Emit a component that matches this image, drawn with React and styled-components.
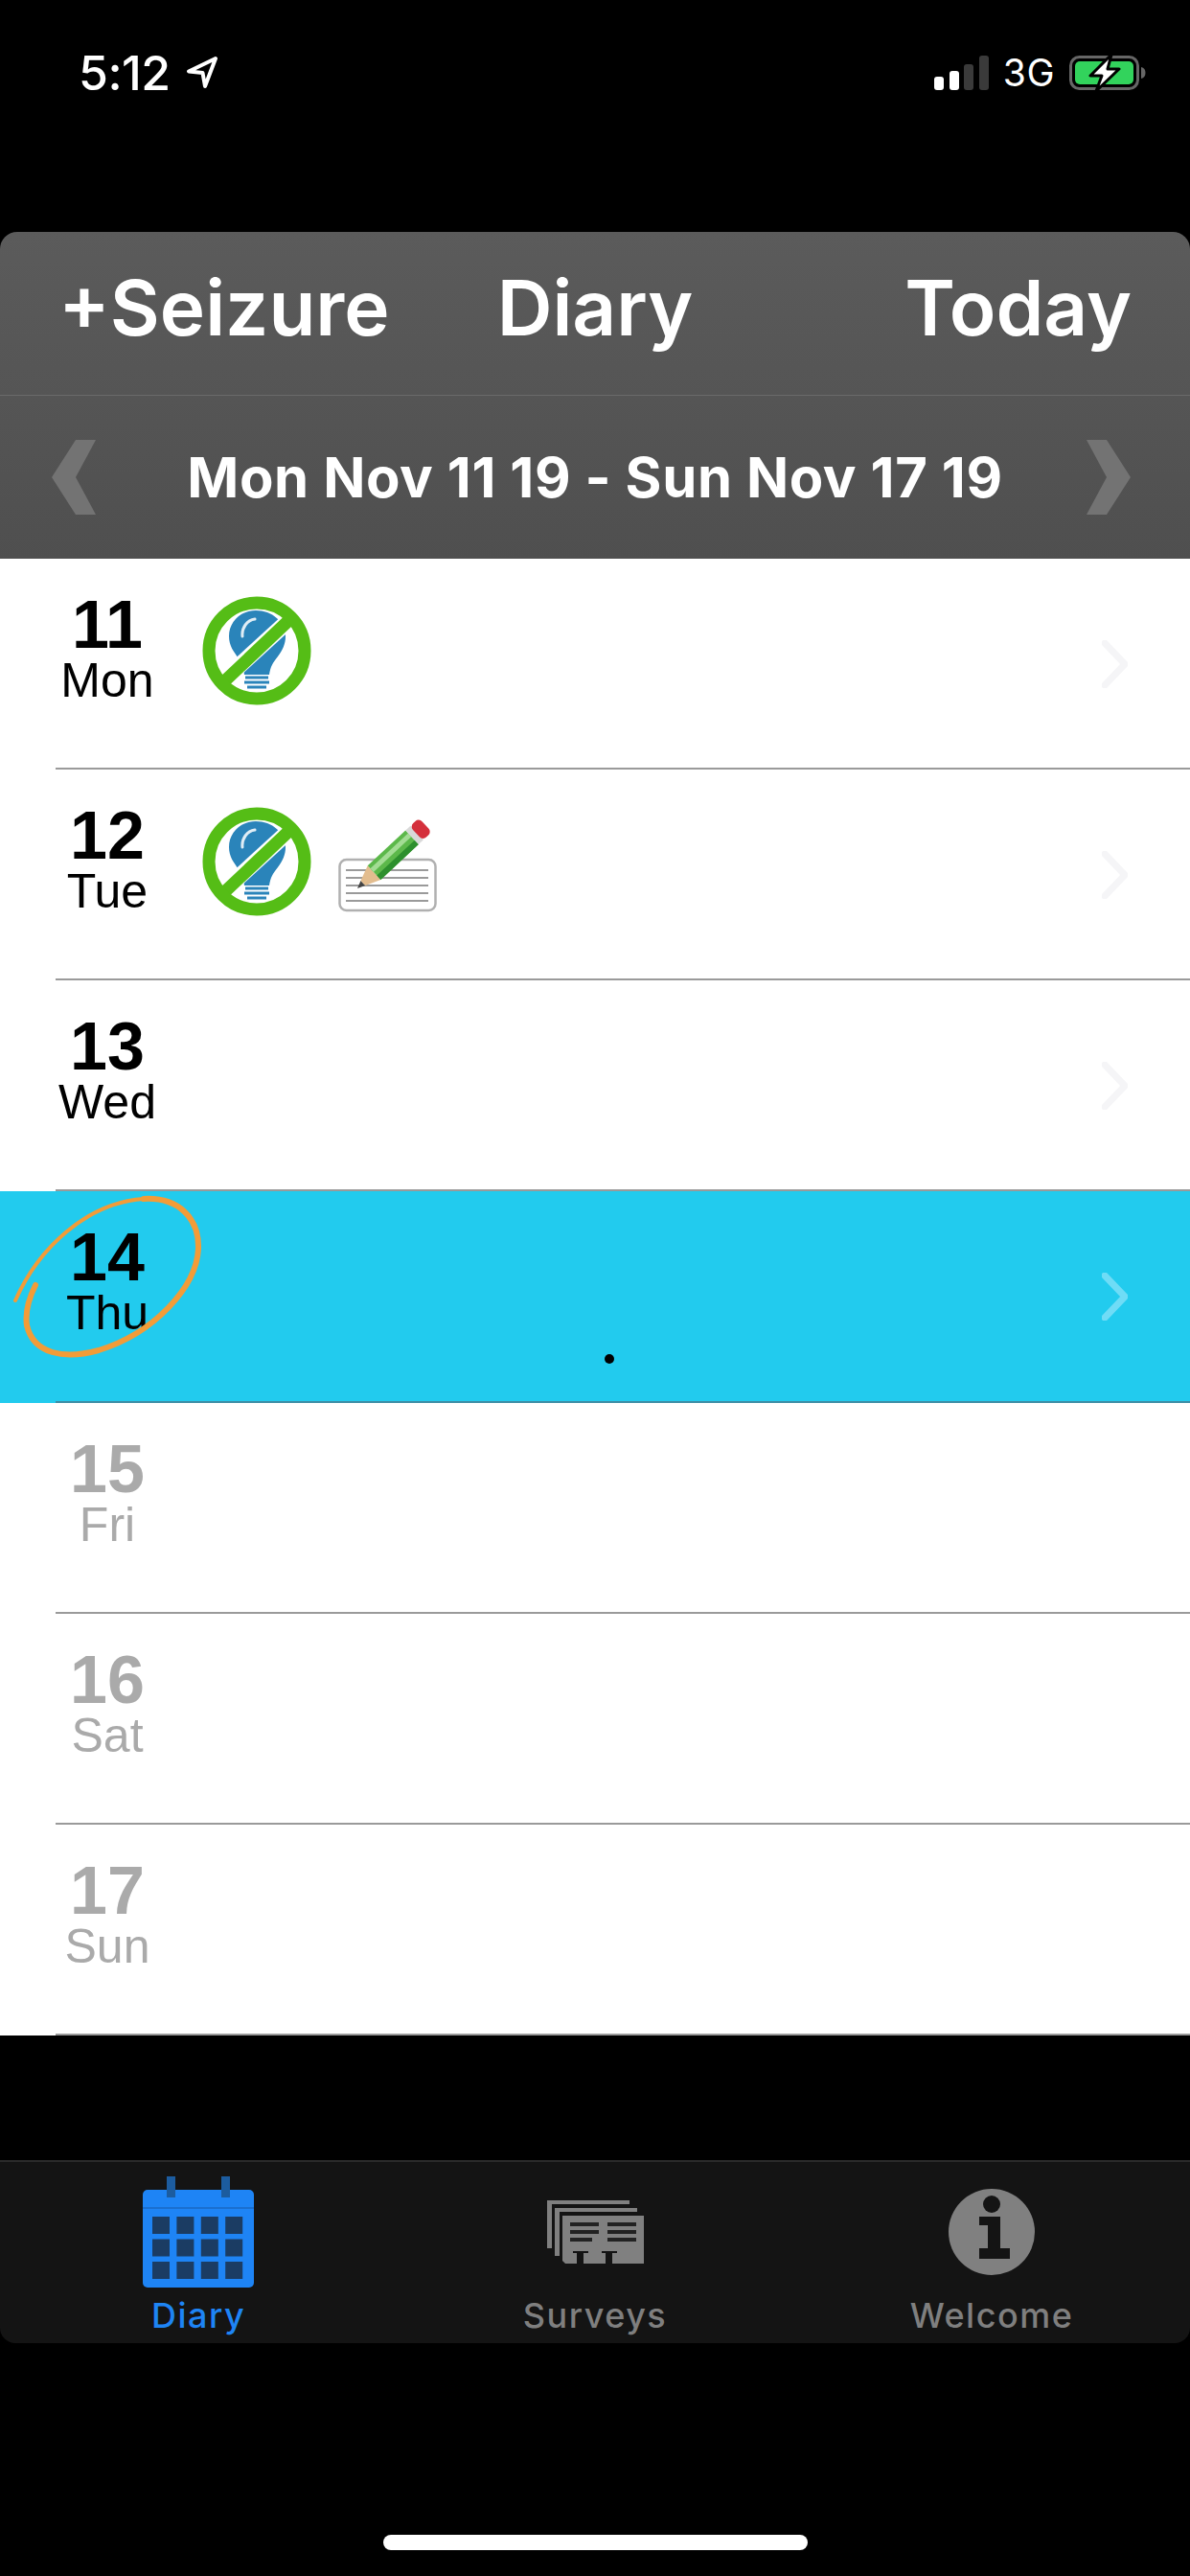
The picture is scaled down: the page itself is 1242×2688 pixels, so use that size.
import React from 'react';
import styled, { createGlobalStyle } from 'styled-components';

const UI_FONT = `Inter, "Noto Sans", sans-serif`;
const LIST_FONT = `"Liberation Sans", Arial, sans-serif`;

const GlobalStyle = createGlobalStyle`
  html, body {
    margin: 0;
    padding: 0;
    background: #000;
  }
`;

const Page = styled.div`
  width: 1242px;
  height: 2688px;
  background: #000;
  display: flex;
  flex-direction: column;
  overflow: hidden;
  font-family: ${UI_FONT};
`;

const StatusBar = styled.div`
  height: 242px;
  box-sizing: border-box;
  padding: 50px 46px 0 82px;
  display: flex;
  justify-content: space-between;
  align-items: flex-start;
  color: #fff;
`;
const StatusGroup = styled.div`
  display: flex;
  align-items: center;
  gap: ${(p) => p.$gap}px;
  height: 52px;
`;
const Clock = styled.span`
  font-size: 50px;
  font-weight: 500;
  line-height: 52px;
  letter-spacing: -0.5px;
`;
const Network = styled.span`
  font-size: 39px;
  line-height: 52px;
  font-weight: 400;
  letter-spacing: 0.5px;
`;

const Header = styled.header`
  border-radius: 18px 18px 0 0;
  overflow: hidden;
  color: #fff;
`;
const TitleRow = styled.div`
  height: 171px;
  box-sizing: border-box;
  padding: 0 61px 14px;
  display: grid;
  grid-template-columns: 1fr auto 1fr;
  align-items: center;
  font-size: 80px;
  font-weight: 600;
  background: linear-gradient(#5b5b5b, #555);
  border-bottom: 1px solid #6a6a6a;
`;
const TitleEnd = styled.span`
  text-align: ${(p) => p.$align};
`;
const WeekRow = styled.div`
  height: 170px;
  box-sizing: border-box;
  padding: 0 62px 0 54px;
  display: flex;
  justify-content: space-between;
  align-items: center;
  background: linear-gradient(#555, #4f4f4f);
`;
const WeekLabel = styled.span`
  font-size: 58px;
  font-weight: 700;
  letter-spacing: 0.6px;
  margin-left: 8px;
`;

const DayList = styled.div`
  height: 1541px;
  display: grid;
  grid-template-rows: repeat(7, 1fr);
  background: #fff;
`;
const DayRow = styled.div`
  position: relative;
  display: flex;
  align-items: flex-start;
  gap: 9px;
  padding: 0 65px 0 22px;
  background: ${(p) => (p.$selected ? '#22cbee' : '#fff')};
  &::after {
    content: '';
    position: absolute;
    left: 58px;
    right: 0;
    bottom: 0;
    height: 2px;
    background: ${(p) => (p.$selected ? '#3e8ea6' : '#9a9a9a')};
  }
`;
const DateCol = styled.div`
  width: 180px;
  flex: none;
  padding-top: 36px;
  text-align: center;
  font-family: ${LIST_FONT};
  color: ${(p) => (p.$future ? '#aaaaaa' : '#000')};
`;
const DayNumber = styled.div`
  font-size: 70px;
  font-weight: 700;
  line-height: 66px;
`;
const DayName = styled.div`
  font-size: 50px;
  line-height: 50px;
`;
const Marks = styled.div`
  display: flex;
  align-items: flex-start;
  gap: 28px;
  padding-top: 39px;
`;
const NoteMark = styled.svg`
  margin-top: 12px;
`;
const RowChevron = styled.svg`
  margin-left: auto;
  align-self: center;
`;
const Scribble = styled.svg`
  position: absolute;
  left: 0;
  top: 0;
  pointer-events: none;
`;
const Dot = styled.span`
  position: absolute;
  left: 631px;
  top: 170px;
  width: 10px;
  height: 10px;
  border-radius: 50%;
  background: #000;
`;

const TabBar = styled.nav`
  margin-top: 130px;
  height: 191px;
  box-sizing: border-box;
  background: #141414;
  border-top: 2px solid #2a2a2a;
  border-radius: 0 0 16px 16px;
  display: grid;
  grid-template-columns: repeat(3, 1fr);
`;
const Tab = styled.div`
  display: flex;
  flex-direction: column;
  align-items: center;
  color: ${(p) => (p.$active ? '#1e84f5' : '#7f7f7f')};
`;
const TabIcon = styled.div`
  height: 145px;
  display: flex;
  align-items: center;
  justify-content: center;
`;
const TabLabel = styled.span`
  font-size: 36px;
  font-weight: 500;
  line-height: 36px;
  letter-spacing: 1.5px;
  margin-top: -3px;
`;

const HomeBar = styled.div`
  width: 443px;
  height: 16px;
  margin: 200px auto 0;
  border-radius: 8px;
  background: #fff;
`;

const LocationIcon = () => (
  <svg width="34" height="34" viewBox="0 0 34 34">
    <path d="M31 2 3 15.5 17.5 17 20 31Z" fill="none" stroke="#fff" strokeWidth="4" strokeLinejoin="round" />
  </svg>
);

const SignalIcon = () => (
  <svg width="57" height="36" viewBox="0 0 57 36">
    <rect x="0" y="22" width="10" height="14" rx="3" fill="#fff" />
    <rect x="16" y="16" width="10" height="20" rx="3" fill="#fff" />
    <rect x="31" y="9" width="10" height="27" rx="3" fill="#3a3a3a" />
    <rect x="47" y="0" width="10" height="36" rx="3" fill="#3a3a3a" />
  </svg>
);

const BatteryIcon = () => (
  <svg width="80" height="38" viewBox="0 0 80 38">
    <rect x="1.5" y="2.5" width="70" height="33" rx="9" fill="none" stroke="#666" strokeWidth="3" />
    <rect x="6" y="7" width="61" height="24" rx="5" fill="#32d35c" />
    <path d="M75 13c3 .5 4.500 3 4.500 6s-1.500 5.500-4.500 6z" fill="#666" />
    <path d="M44 0 22 22h12l-6 16 24-23H40z" fill="#fff" stroke="#000" strokeWidth="3" strokeLinejoin="round" />
  </svg>
);

const PrevArrow = () => (
  <svg width="46" height="78" viewBox="0 0 46 78">
    <path d="M25 0h21L25 39l21 39H25L0 39Z" fill="#737373" />
  </svg>
);
const NextArrow = () => (
  <svg width="46" height="78" viewBox="0 0 46 78">
    <path d="M21 0H0l21 39L0 78h21l25-39Z" fill="#737373" />
  </svg>
);

const NoBulbIcon = () => (
  <svg width="114" height="114" viewBox="0 0 114 114">
    <path
      d="M56 15c-16 0-28 12-28 27 0 10 5 16 10 23 4 5 5 10 6 17h26c1-8 4-13 9-19 5-7 8-13 8-21 0-15-14-27-31-27Z"
      fill="#2a84ba"
    />
    <path d="M42 42c-1-9 5-17 13-18" fill="none" stroke="#fff" strokeWidth="3" strokeLinecap="round" opacity="0.85" />
    <path d="M45 85h24M44 90h26M47 95h20" stroke="#2a84ba" strokeWidth="3" fill="none" />
    <path d="M22 88 92 24" stroke="#fff" strokeWidth="17" />
    <path d="M20 92 94 22" stroke="#55bd16" strokeWidth="13" />
    <circle cx="57" cy="57" r="50" fill="none" stroke="#55bd16" strokeWidth="13" />
  </svg>
);

const NoteIcon = () => (
  <NoteMark width="106" height="98" viewBox="0 0 106 98">
    <rect x="1.500" y="43" width="100" height="53" rx="7" fill="#fff" stroke="#b0b0b0" strokeWidth="2.500" />
    <path d="M8 54h86M8 62h86M8 70h86M8 78h86M8 86h86" stroke="#9a9a9a" strokeWidth="2" />
    <g transform="translate(20 73) rotate(-43)">
      <path d="M0 0 8-3.500 8 3.500Z" fill="#444" />
      <path d="M8-3.500 24-10V10L8 3.500Z" fill="#e3bd8f" />
      <rect x="24" y="-10" width="54" height="20" fill="#5cb84a" />
      <rect x="24" y="-6" width="54" height="5" fill="#a3dc94" />
      <rect x="24" y="4" width="54" height="6" fill="#2d8f2d" />
      <rect x="78" y="-10" width="7" height="20" fill="#d9d9d9" />
      <rect x="84" y="-10" width="13" height="20" rx="5" fill="#d4303c" />
    </g>
  </NoteMark>
);

const DisclosureIcon = ({ color }) => (
  <RowChevron width="27" height="50" viewBox="0 0 27 50">
    <path d="M3 3 24 25 3 47" fill="none" stroke={color} strokeWidth="7" strokeLinecap="round" strokeLinejoin="round" />
  </RowChevron>
);

const CalendarIcon = () => (
  <svg width="116" height="116" viewBox="0 0 116 116">
    <path d="M5 14h106a5 5 0 0 1 5 5v92a5 5 0 0 1-5 5H5a5 5 0 0 1-5-5V19a5 5 0 0 1 5-5Z" fill="#1e84f5" />
    <rect y="32" width="116" height="2" fill="#1a6fd0" />
    <rect x="25" y="0" width="9" height="22" fill="#1c5c9f" />
    <rect x="82" y="0" width="9" height="22" fill="#1c5c9f" />
    {[0, 1, 2].map((r) =>
      [0, 1, 2, 3].map((c) => (
        <rect key={`${r}-${c}`} x={10 + c * 25.400} y={42 + r * 23.500} width="18" height="18" fill="#1b3c63" />
      )),
    )}
  </svg>
);

const SurveysIcon = () => (
  <svg width="101" height="66" viewBox="0 0 101 66">
    <path d="M0 0h86v4H5v46H0Z" fill="#808080" />
    <path d="M8 8h86v4H13v46H8Z" fill="#808080" />
    <path d="M16 16h85v50H19l-3-3Z" fill="#808080" />
    <path d="M24 25h30M24 33h30M24 41h23M63 25h30M63 33h30M63 41h30" stroke="#222" strokeWidth="4" />
    <path d="M27 53h16v2h-5v11h-7V55h-4ZM57 53h16v2h-5v11h-7V55h-4Z" fill="#141414" />
  </svg>
);

const InfoIcon = () => (
  <svg width="90" height="90" viewBox="0 0 90 90">
    <circle cx="45" cy="45" r="45" fill="#808080" />
    <circle cx="45" cy="16" r="9" fill="#141414" />
    <path d="M32 29h22v33h10v11H32V62h9V38h-9Z" fill="#141414" />
  </svg>
);

const DAYS = [
  { num: 11, name: 'Mon', bulb: true },
  { num: 12, name: 'Tue', bulb: true, note: true },
  { num: 13, name: 'Wed' },
  { num: 14, name: 'Thu', selected: true },
  { num: 15, name: 'Fri', future: true },
  { num: 16, name: 'Sat', future: true },
  { num: 17, name: 'Sun', future: true },
];

const App = () => (
  <Page>
    <GlobalStyle />
    <StatusBar>
      <StatusGroup $gap={16}>
        <Clock>5:12</Clock>
        <LocationIcon />
      </StatusGroup>
      <StatusGroup $gap={15}>
        <SignalIcon />
        <Network>3G</Network>
        <BatteryIcon />
      </StatusGroup>
    </StatusBar>

    <Header>
      <TitleRow>
        <TitleEnd $align="left">+Seizure</TitleEnd>
        <span>Diary</span>
        <TitleEnd $align="right">Today</TitleEnd>
      </TitleRow>
      <WeekRow>
        <PrevArrow />
        <WeekLabel>Mon Nov 11 19 - Sun Nov 17 19</WeekLabel>
        <NextArrow />
      </WeekRow>
    </Header>

    <DayList>
      {DAYS.map((day) => (
        <DayRow key={day.num} $selected={day.selected}>
          <DateCol $future={day.future}>
            <DayNumber>{day.num}</DayNumber>
            <DayName>{day.name}</DayName>
          </DateCol>
          {(day.bulb || day.note) && (
            <Marks>
              {day.bulb && <NoBulbIcon />}
              {day.note && <NoteIcon />}
            </Marks>
          )}
          {!day.future && <DisclosureIcon color={day.selected ? '#6fdcf6' : '#f5f5f7'} />}
          {day.selected && (
            <>
              <Scribble width="220" height="190" viewBox="0 0 220 190">
                <path d="M16 114C40 60 90 12 150 8" fill="none" stroke="#f29c38" strokeWidth="4" strokeLinecap="round" />
                <path
                  d="M150 8c36-2 58 20 57 52-2 40-46 88-104 106-36 10-68 4-75-26-2-14 2-28 9-42"
                  fill="none"
                  stroke="#f29c38"
                  strokeWidth="6"
                  strokeLinecap="round"
                />
              </Scribble>
              <Dot />
            </>
          )}
        </DayRow>
      ))}
    </DayList>

    <TabBar>
      <Tab $active>
        <TabIcon>
          <CalendarIcon />
        </TabIcon>
        <TabLabel>Diary</TabLabel>
      </Tab>
      <Tab>
        <TabIcon>
          <SurveysIcon />
        </TabIcon>
        <TabLabel>Surveys</TabLabel>
      </Tab>
      <Tab>
        <TabIcon>
          <InfoIcon />
        </TabIcon>
        <TabLabel>Welcome</TabLabel>
      </Tab>
    </TabBar>

    <HomeBar />
  </Page>
);

export default App;
